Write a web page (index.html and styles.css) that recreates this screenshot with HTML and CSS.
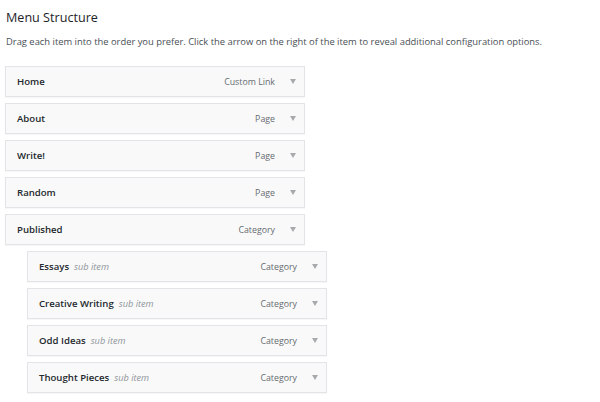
FILE: index.html
```html
<!DOCTYPE html>
<html>
<head>
<meta charset="utf-8">
<link rel="stylesheet" href="styles.css">
</head>
<body>
<div class="page">
  <h2 class="title">Menu Structure</h2>
  <p class="desc">Drag each item into the order you prefer. Click the arrow on the right of the item to reveal additional configuration options.</p>
  <ul class="menu">
    <li class="item"><span class="name">Home</span><span class="type">Custom Link</span><span class="arrow"></span></li>
    <li class="item"><span class="name">About</span><span class="type">Page</span><span class="arrow"></span></li>
    <li class="item"><span class="name">Write!</span><span class="type">Page</span><span class="arrow"></span></li>
    <li class="item"><span class="name">Random</span><span class="type">Page</span><span class="arrow"></span></li>
    <li class="item"><span class="name">Published</span><span class="type">Category</span><span class="arrow"></span></li>
    <li class="item sub"><span class="name">Essays</span><span class="subtag">sub item</span><span class="type">Category</span><span class="arrow"></span></li>
    <li class="item sub"><span class="name">Creative Writing</span><span class="subtag">sub item</span><span class="type">Category</span><span class="arrow"></span></li>
    <li class="item sub"><span class="name">Odd Ideas</span><span class="subtag">sub item</span><span class="type">Category</span><span class="arrow"></span></li>
    <li class="item sub"><span class="name">Thought Pieces</span><span class="subtag">sub item</span><span class="type">Category</span><span class="arrow"></span></li>
  </ul>
</div>
</body>
</html>
```
FILE: styles.css
```css
html, body {
  margin: 0;
  padding: 0;
  background: #ffffff;
}
body {
  font-family: "Open Sans", "Noto Sans", sans-serif;
  color: #23282d;
}
.page {
  padding: 8px 5px 0 5px;
}
.title {
  margin: 0 0 0 1px;
  font-size: 12.6px;
  font-weight: 400;
  line-height: 20px;
  color: #1e2328;
}
.desc {
  margin: 5px 0 0 1px;
  font-size: 9.4px;
  line-height: 18px;
  color: #4a4f55;
  white-space: nowrap;
}
.menu {
  list-style: none;
  margin: 15px 0 0 0;
  padding: 0;
}
.item {
  box-sizing: border-box;
  width: 300px;
  height: 31px;
  margin-bottom: 6px;
  display: flex;
  align-items: center;
  padding: 0 0 0 11px;
  background: #f9f9f9;
  border: 1px solid #e2e4e7;
  box-shadow: 0 1px 1px rgba(0,0,0,0.03);
}
.item.sub {
  margin-left: 22px;
}
.name {
  font-size: 9.6px;
  font-weight: 600;
  color: #23282d;
}
.subtag {
  margin-left: 5px;
  font-size: 9.2px;
  font-style: italic;
  color: #8f959b;
}
.type {
  margin-left: auto;
  font-size: 8.8px;
  color: #666b70;
}
.arrow {
  width: 0;
  height: 0;
  margin: 0 8px 0 15px;
  border-left: 3px solid transparent;
  border-right: 3px solid transparent;
  border-top: 5px solid #a7aaad;
}
```
